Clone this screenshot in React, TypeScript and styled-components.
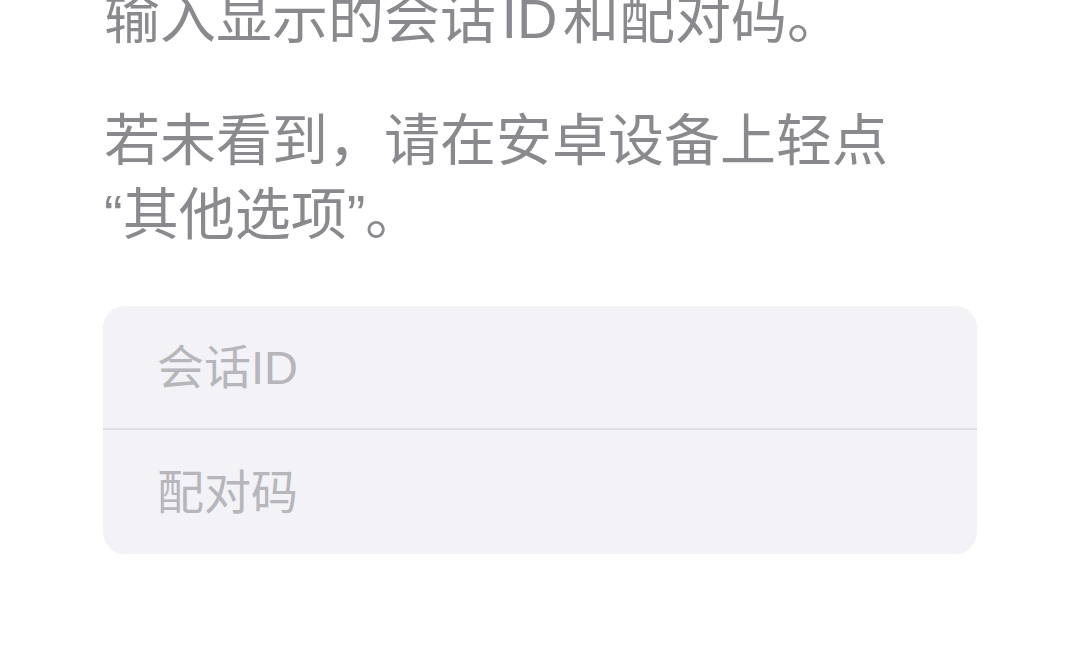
import React from 'react';
import styled, { createGlobalStyle } from 'styled-components';

const fontStack = `"Liberation Sans", "Noto Sans CJK SC", sans-serif`;

const GlobalStyle = createGlobalStyle`
  html, body {
    margin: 0;
    padding: 0;
    background: #ffffff;
  }
  body {
    font-family: ${fontStack};
    overflow: hidden;
  }
`;

const Page = styled.div`
  width: 1080px;
  height: 669px;
  box-sizing: border-box;
  padding: 0 103px;
  overflow: hidden;
`;

const Content = styled.div`
  margin-top: -18px;
  display: flex;
  flex-direction: column;
`;

const Paragraph = styled.p`
  margin: 0 0 48px 1px;
  font-size: 56px;
  line-height: 74px;
  font-weight: 400;
  word-spacing: -10px;
  color: #8a8a8e;
`;

const FieldGroup = styled.div`
  margin-top: 6px;
  background: #f2f2f7;
  border-radius: 22px;
  overflow: hidden;
  display: flex;
  flex-direction: column;
`;

const Field = styled.input<{ $last?: boolean }>`
  height: 124px;
  box-sizing: border-box;
  border: none;
  border-bottom: ${(p) => (p.$last ? 'none' : '2px solid #dedee3')};
  background: transparent;
  padding: 0 54px;
  font-family: ${fontStack};
  font-size: 47px;
  color: #1c1c1e;
  outline: none;

  &::placeholder {
    color: #b6b6bb;
  }
`;

export default function App(): JSX.Element {
  return (
    <>
      <GlobalStyle />
      <Page>
        <Content>
          <Paragraph>输入显示的会话 ID 和配对码。</Paragraph>
          <Paragraph>
            若未看到，请在安卓设备上轻点
            <br />
            “其他选项”。
          </Paragraph>
          <FieldGroup>
            <Field placeholder="会话ID" />
            <Field placeholder="配对码" $last />
          </FieldGroup>
        </Content>
      </Page>
    </>
  );
}
